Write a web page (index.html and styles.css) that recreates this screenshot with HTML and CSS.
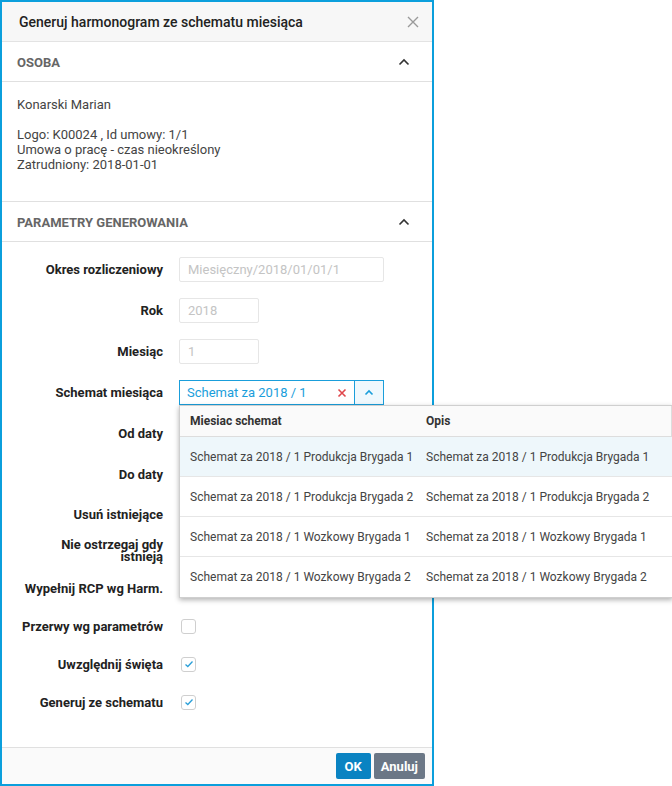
FILE: index.html
```html
<!DOCTYPE html>
<html lang="pl">
<head>
    <meta charset="UTF-8">
    <title>Generuj harmonogram ze schematu miesiąca</title>
    <link rel="stylesheet" href="styles.css">
</head>
<body>

<div class="dialog">
    <div class="dialog-header">
        <span class="dialog-title">Generuj harmonogram ze schematu miesiąca</span>
        <svg class="close" width="12" height="12" viewBox="0 0 12 12"><path d="M1 1L11 11M11 1L1 11" stroke="#9a9a9a" stroke-width="1.4" fill="none"/></svg>
    </div>

    <div class="dialog-body">
        <div class="section-header">
            <span>Osoba</span>
            <svg class="chevron" width="12" height="8" viewBox="0 0 12 8"><path d="M1.5 6.5L6 2L10.5 6.5" stroke="#333" stroke-width="1.6" fill="none"/></svg>
        </div>
        <div class="person">
            <p>Konarski Marian</p>
            <p>Logo: K00024 , Id umowy: 1/1<br>Umowa o pracę - czas nieokreślony<br>Zatrudniony: 2018-01-01</p>
        </div>

        <div class="section-header">
            <span>Parametry generowania</span>
            <svg class="chevron" width="12" height="8" viewBox="0 0 12 8"><path d="M1.5 6.5L6 2L10.5 6.5" stroke="#333" stroke-width="1.6" fill="none"/></svg>
        </div>
        <div class="form">
            <label class="row-label">Okres rozliczeniowy</label>
            <div class="field"><div class="input wide">Miesięczny/2018/01/01/1</div></div>

            <label class="row-label">Rok</label>
            <div class="field"><div class="input short">2018</div></div>

            <label class="row-label">Miesiąc</label>
            <div class="field"><div class="input short">1</div></div>

            <label class="row-label">Schemat miesiąca</label>
            <div class="field">
                <div class="select">
                    <span class="select-value">Schemat za 2018 / 1</span>
                    <svg class="clear" width="10" height="10" viewBox="0 0 10 10"><path d="M1.5 1.5L8.5 8.5M8.5 1.5L1.5 8.5" stroke="#e0474c" stroke-width="1.6" fill="none"/></svg>
                    <span class="select-btn">
                        <svg width="10" height="7" viewBox="0 0 10 7"><path d="M1.5 5.5L5 2L8.5 5.5" stroke="#1a9edb" stroke-width="1.6" fill="none"/></svg>
                    </span>
                    <div class="dropdown">
                        <div class="dd-row dd-head">
                            <span>Miesiac schemat</span>
                            <span>Opis</span>
                        </div>
                        <div class="dd-row active">
                            <span>Schemat za 2018 / 1 Produkcja Brygada 1</span>
                            <span>Schemat za 2018 / 1 Produkcja Brygada 1</span>
                        </div>
                        <div class="dd-row">
                            <span>Schemat za 2018 / 1 Produkcja Brygada 2</span>
                            <span>Schemat za 2018 / 1 Produkcja Brygada 2</span>
                        </div>
                        <div class="dd-row">
                            <span>Schemat za 2018 / 1 Wozkowy Brygada 1</span>
                            <span>Schemat za 2018 / 1 Wozkowy Brygada 1</span>
                        </div>
                        <div class="dd-row">
                            <span>Schemat za 2018 / 1 Wozkowy Brygada 2</span>
                            <span>Schemat za 2018 / 1 Wozkowy Brygada 2</span>
                        </div>
                    </div>
                </div>
            </div>

            <label class="row-label">Od daty</label>
            <div class="field"><div class="input short"></div></div>

            <label class="row-label">Do daty</label>
            <div class="field"><div class="input short"></div></div>

            <label class="row-label check-row">Usuń istniejące</label>
            <div class="field check-row"><span class="checkbox"></span></div>

            <label class="row-label two-line">Nie ostrzegaj gdy istnieją</label>
            <div class="field two-line"><span class="checkbox"></span></div>

            <label class="row-label check-row">Wypełnij RCP wg Harm.</label>
            <div class="field check-row"><span class="checkbox"></span></div>

            <label class="row-label check-row">Przerwy wg parametrów</label>
            <div class="field check-row"><span class="checkbox"></span></div>

            <label class="row-label check-row">Uwzględnij święta</label>
            <div class="field check-row"><span class="checkbox checked"><svg width="10" height="8" viewBox="0 0 10 8"><path d="M1.5 4.5L3.8 6.5L8.5 1.5" stroke="#2a9fd8" stroke-width="1.3" fill="none"/></svg></span></div>

            <label class="row-label check-row">Generuj ze schematu</label>
            <div class="field check-row"><span class="checkbox checked"><svg width="10" height="8" viewBox="0 0 10 8"><path d="M1.5 4.5L3.8 6.5L8.5 1.5" stroke="#2a9fd8" stroke-width="1.3" fill="none"/></svg></span></div>
        </div>
    </div>

    <div class="dialog-footer">
        <button class="btn btn-ok">OK</button>
        <button class="btn btn-cancel">Anuluj</button>
    </div>
</div>

</body>
</html>
```

FILE: styles.css
```css
body {
    margin: 0;
    font-family: Roboto, "Liberation Sans", sans-serif;
    background: #ffffff;
    color: #333;
}
.dialog {
    width: 434px;
    height: 786px;
    box-sizing: border-box;
    border: 2px solid #0b9fdc;
    display: flex;
    flex-direction: column;
    background: #ffffff;
}
.dialog-header {
    height: 39px;
    background: #f7f7f7;
    border-bottom: 1px solid #e3e3e3;
    display: flex;
    align-items: center;
    justify-content: space-between;
    padding: 0 13px 0 17px;
}
.dialog-title {
    font-size: 14px;
    font-weight: 500;
    color: #222;
}
.close {
    display: block;
}
.dialog-body {
    flex: 1;
}
.section-header {
    height: 38px;
    padding: 1px 22px 0 15px;
    border-bottom: 1px solid #e0e0e0;
    display: flex;
    align-items: center;
    justify-content: space-between;
    font-size: 13px;
    font-weight: bold;
    text-transform: uppercase;
    color: #666;
}
.person {
    padding: 15px 15px 29px;
    border-bottom: 1px solid #e0e0e0;
    font-size: 13px;
    line-height: 15px;
    color: #444;
}
.person p {
    margin: 0 0 15px;
}
.person p:last-child {
    margin-bottom: 0;
}
.form {
    display: grid;
    grid-template-columns: 146px 1fr;
    column-gap: 16px;
    row-gap: 16px;
    padding: 15px 0 0 15px;
}
.row-label {
    height: 25px;
    display: flex;
    align-items: center;
    justify-content: flex-end;
    text-align: right;
    font-size: 13px;
    font-weight: bold;
    color: #222;
}
.field {
    height: 25px;
    display: flex;
    align-items: center;
}
.check-row {
    height: 22px;
}
.two-line {
    height: 20px;
    line-height: 12px;
}
.input {
    height: 25px;
    box-sizing: border-box;
    border: 1px solid #e6e6e6;
    border-radius: 2px;
    padding: 0 8px;
    font-size: 13px;
    line-height: 23px;
    color: #c4c4c4;
}
.input.wide {
    width: 205px;
}
.input.short {
    width: 80px;
}
.select {
    position: relative;
    width: 205px;
    height: 25px;
    box-sizing: border-box;
    border: 1px solid #1a9edb;
    display: flex;
    align-items: center;
}
.select-value {
    flex: 1;
    padding-left: 7px;
    font-size: 13px;
    color: #1a9edb;
}
.clear {
    margin-right: 7px;
}
.select-btn {
    width: 28px;
    height: 100%;
    border-left: 1px solid #1a9edb;
    background: #eff8fd;
    display: flex;
    align-items: center;
    justify-content: center;
}
.dropdown {
    position: absolute;
    top: 24px;
    left: -1px;
    width: 492px;
    background: #ffffff;
    border: 1px solid #cfcfcf;
    box-shadow: 0 2px 5px rgba(0, 0, 0, 0.3);
    z-index: 10;
}
.dd-row {
    display: grid;
    grid-template-columns: 236px 1fr;
    height: 40px;
    box-sizing: border-box;
    align-items: center;
    border-bottom: 1px solid #e6e6e6;
    font-size: 12px;
    color: #444;
    white-space: nowrap;
}
.dd-row:last-child {
    border-bottom: none;
}
.dd-row span {
    padding-left: 10px;
}
.dd-head {
    height: 31px;
    background: #fafafa;
    border-bottom: 1px solid #dddddd;
    font-weight: bold;
    color: #333;
    border-right: 1px solid #dddddd;
}
.dd-row.active {
    background: #eef7fb;
}
.checkbox {
    width: 15px;
    height: 15px;
    box-sizing: border-box;
    border: 1px solid #cfcfcf;
    border-radius: 3px;
    margin-left: 2px;
    display: flex;
    align-items: center;
    justify-content: center;
}
.dialog-footer {
    height: 36px;
    border-top: 1px solid #e0e0e0;
    background: #fafafa;
    display: flex;
    justify-content: flex-end;
    align-items: center;
    gap: 3px;
    padding-right: 7px;
}
.btn {
    height: 26px;
    border: none;
    border-radius: 2px;
    color: white;
    font-family: Roboto, "Liberation Sans", sans-serif;
    font-size: 13px;
    font-weight: bold;
    padding: 0 7px;
    cursor: pointer;
}
.btn-ok {
    padding: 0 9px;
    background: #0a83c2;
}
.btn-cancel {
    background: #6b7786;
}
```
